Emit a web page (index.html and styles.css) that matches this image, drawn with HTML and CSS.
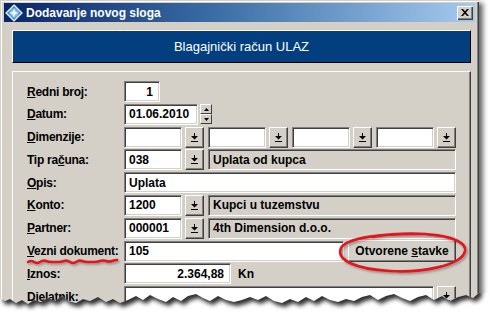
FILE: index.html
```html
<!doctype html>
<html lang="hr">
<head>
  <meta charset="utf-8">
  <title>Dodavanje novog sloga</title>
  <link rel="stylesheet" href="styles.css">
</head>
<body>
<div class="shot">

  <!-- Prozor dijaloga -->
  <div class="window">
    <div class="titlebar">
      <svg class="app-icon" width="18" height="18" viewBox="0 0 18 18" aria-hidden="true">
        <defs>
          <radialGradient id="gem" cx="50%" cy="50%" r="60%">
            <stop offset="0" stop-color="#e8f6ff"/>
            <stop offset=".45" stop-color="#5aa8ee"/>
            <stop offset="1" stop-color="#0d2f86"/>
          </radialGradient>
        </defs>
        <path d="M9 1 L17 9 L9 17 L1 9 Z" fill="url(#gem)" stroke="#fff" stroke-width="1.2"/>
        <path d="M9 4 L10 8 L14 9 L10 10 L9 14 L8 10 L4 9 L8 8 Z" fill="#fff"/>
      </svg>
      <span class="title">Dodavanje novog sloga</span>
      <span class="close">
        <svg width="8" height="7" viewBox="0 0 8 7"><path d="M0 0h2l2 2.2L6 0h2L5 3.5 8 7H6L4 4.8 2 7H0l3-3.5z" fill="#000"/></svg>
      </span>
    </div>

    <div class="client">
      <div class="banner">Blagajnički račun ULAZ</div>

      <div class="panel">
        <div class="row">
          <span class="lbl"><u>R</u>edni broj:</span>
          <span class="input w-redni right">1</span>
        </div>
        <div class="row">
          <span class="lbl"><u>D</u>atum:</span>
          <span class="input w-datum">01.06.2010</span>
          <span class="spin">
            <span class="spin-btn"><svg width="5" height="3" viewBox="0 0 5 3"><path d="M2.5 0L5 3H0z"/></svg></span>
            <span class="spin-btn"><svg width="5" height="3" viewBox="0 0 5 3"><path d="M0 0h5L2.5 3z"/></svg></span>
          </span>
        </div>
        <div class="row">
          <span class="lbl"><u>D</u>imenzije:</span>
          <span class="input w-code"></span>
          <span class="pick"><svg width="7" height="9" viewBox="0 0 7 9"><path d="M3 0h1v3h3L3.5 6.5 0 3h3zM0 8h7v1H0z"/></svg></span>
          <span class="input w-code"></span>
          <span class="pick"><svg width="7" height="9" viewBox="0 0 7 9"><path d="M3 0h1v3h3L3.5 6.5 0 3h3zM0 8h7v1H0z"/></svg></span>
          <span class="input w-code"></span>
          <span class="pick"><svg width="7" height="9" viewBox="0 0 7 9"><path d="M3 0h1v3h3L3.5 6.5 0 3h3zM0 8h7v1H0z"/></svg></span>
          <span class="input w-code"></span>
          <span class="pick"><svg width="7" height="9" viewBox="0 0 7 9"><path d="M3 0h1v3h3L3.5 6.5 0 3h3zM0 8h7v1H0z"/></svg></span>
        </div>
        <div class="row">
          <span class="lbl">Tip ra<u>č</u>una:</span>
          <span class="input w-code">038</span>
          <span class="pick"><svg width="7" height="9" viewBox="0 0 7 9"><path d="M3 0h1v3h3L3.5 6.5 0 3h3zM0 8h7v1H0z"/></svg></span>
          <span class="input show grow">Uplata od kupca</span>
        </div>
        <div class="row">
          <span class="lbl"><u>O</u>pis:</span>
          <span class="input grow">Uplata</span>
        </div>
        <div class="row">
          <span class="lbl"><u>K</u>onto:</span>
          <span class="input w-code">1200</span>
          <span class="pick"><svg width="7" height="9" viewBox="0 0 7 9"><path d="M3 0h1v3h3L3.5 6.5 0 3h3zM0 8h7v1H0z"/></svg></span>
          <span class="input show grow">Kupci u tuzemstvu</span>
        </div>
        <div class="row">
          <span class="lbl"><u>P</u>artner:</span>
          <span class="input w-code">000001</span>
          <span class="pick"><svg width="7" height="9" viewBox="0 0 7 9"><path d="M3 0h1v3h3L3.5 6.5 0 3h3zM0 8h7v1H0z"/></svg></span>
          <span class="input show grow">4th Dimension d.o.o.</span>
        </div>
        <div class="row">
          <span class="lbl"><u>V</u>ezni dokument:</span>
          <span class="input grow">105</span>
          <span class="btn"><span>Otvorene <u>s</u>tavke</span></span>
        </div>
        <div class="row">
          <span class="lbl"><u>I</u>znos:</span>
          <span class="input w-iznos right">2.364,88</span>
          <span class="unit">Kn</span>
        </div>
        <div class="row">
          <span class="lbl">D<u>j</u>elatnik:</span>
          <span class="input grow"></span>
          <span class="pick"><svg width="7" height="9" viewBox="0 0 7 9"><path d="M3 0h1v3h3L3.5 6.5 0 3h3zM0 8h7v1H0z"/></svg></span>
        </div>
      </div>
    </div>
  </div>

  <!-- Poderani rub i crvene oznake -->
  <svg class="overlay" width="493" height="322" viewBox="0 0 493 322" aria-hidden="true">
    <defs>
      <clipPath id="below">
        <path d="M0 298 L5 301 L10 299 L16 303 L22 300 L28 304 L34 300 L41 302 L48 298 L55 301 L62 296 L68 301 L76 303 L83 299 L90 301 L98 297 L106 302 L113 299 L120 303 L128 300 L136 296 L143 300 L150 295 L158 299 L166 302 L173 297 L181 301 L188 296 L196 294 L203 298 L210 301 L218 296 L226 300 L234 302 L242 300 L250 297 L258 300 L266 296 L274 301 L282 303 L290 299 L298 302 L306 297 L314 301 L322 296 L330 300 L338 302 L346 299 L354 301 L362 297 L370 295 L378 300 L386 296 L394 294 L402 298 L410 301 L418 297 L426 295 L434 300 L442 296 L450 301 L458 297 L466 295 L473 298 L479 293 L493 293 L493 322 L0 322 Z"/>
      </clipPath>
      <filter id="blur" x="-10%" y="-10%" width="120%" height="120%">
        <feGaussianBlur stdDeviation="2"/>
      </filter>
      <filter id="ink" x="-10%" y="-30%" width="120%" height="160%">
        <feDropShadow dx="1.5" dy="1.5" stdDeviation="1" flood-color="#000" flood-opacity=".35"/>
      </filter>
    </defs>

    <path fill="#fff" d="M0 298 L5 301 L10 299 L16 303 L22 300 L28 304 L34 300 L41 302 L48 298 L55 301 L62 296 L68 301 L76 303 L83 299 L90 301 L98 297 L106 302 L113 299 L120 303 L128 300 L136 296 L143 300 L150 295 L158 299 L166 302 L173 297 L181 301 L188 296 L196 294 L203 298 L210 301 L218 296 L226 300 L234 302 L242 300 L250 297 L258 300 L266 296 L274 301 L282 303 L290 299 L298 302 L306 297 L314 301 L322 296 L330 300 L338 302 L346 299 L354 301 L362 297 L370 295 L378 300 L386 296 L394 294 L402 298 L410 301 L418 297 L426 295 L434 300 L442 296 L450 301 L458 297 L466 295 L473 298 L479 293 L493 293 L493 322 L0 322 Z"/>

    <g clip-path="url(#below)">
      <path fill="#2e2e2e" filter="url(#blur)" transform="translate(3 4)" d="M0 0 L479 0 L479 293 L473 298 L466 295 L458 297 L450 301 L442 296 L434 300 L426 295 L418 297 L410 301 L402 298 L394 294 L386 296 L378 300 L370 295 L362 297 L354 301 L346 299 L338 302 L330 300 L322 296 L314 301 L306 297 L298 302 L290 299 L282 303 L274 301 L266 296 L258 300 L250 297 L242 300 L234 302 L226 300 L218 296 L210 301 L203 298 L196 294 L188 296 L181 301 L173 297 L166 302 L158 299 L150 295 L143 300 L136 296 L128 300 L120 303 L113 299 L106 302 L98 297 L90 301 L83 299 L76 303 L68 301 L62 296 L55 301 L48 298 L41 302 L34 300 L28 304 L22 300 L16 303 L10 299 L5 301 L0 298 Z"/>
    </g>

    <g fill="none" stroke="#e3131b" stroke-width="2.6" stroke-linecap="round" filter="url(#ink)">
      <path d="M372 237 C420 229 468 236 465 251 C462 266 420 273 390 271 C355 269 336 260 341 248 C346 238 382 233 424 234"/>
      <path d="M28 262 q3 -2 6 0 t6 0 t6 -1 t6 1 t6 0 t6 -1 t6 1 t6 0 t6 -1 t6 1 t6 0 t6 -1 t6 0 t6 0 t5 -1"/>
    </g>
  </svg>
</div>
</body>
</html>
```

FILE: styles.css
```css
/* ===== Win classic tokens ===== */
:root{
  --face:#d4d0c8; --hi:#fff; --shadow:#808080; --dark:#404040;
  --navy:#033f7f;
}
*{ box-sizing:border-box }
body{ margin:0; background:#fff; font:bold 12px "Liberation Sans", Arial, sans-serif; color:#000; overflow:hidden; }

.shot{ position:relative; width:493px; height:322px; overflow:hidden; }

/* Window frame */
.window{ width:479px; height:340px; padding:3px 4px 0 4px; background:var(--face);
  box-shadow: inset 1px 1px 0 var(--face), inset 2px 2px 0 var(--hi), inset -1px -1px 0 var(--dark), inset -2px -2px 0 var(--shadow), 4px 3px 5px rgba(0,0,0,.6); }

.titlebar{ height:19px; display:flex; align-items:center; padding:0 2px 0 1px; color:#fff;
  background:linear-gradient(90deg,#0a246a 0%,#3a6ea5 45%,#a6caf0 100%); }
.app-icon{ display:block; margin-right:3px; }
.title{ flex:1; font-size:12px; font-weight:bold; white-space:nowrap; }
.close{ width:16px; height:14px; display:flex; align-items:center; justify-content:center; background:var(--face);
  box-shadow: inset 1px 1px 0 var(--hi), inset -1px -1px 0 var(--dark), inset -2px -2px 0 var(--shadow); }
.close svg{ display:block; }

.client{ padding:8px 4px 0 8px; }

.banner{ height:33px; display:flex; align-items:center; justify-content:center; background:var(--navy); color:#fff;
  font-weight:normal; font-size:13px; border:1px solid; border-color:#fff #000 #000 #fff; }

/* Form panel */
.panel{ margin-top:8px; padding:9px 15px 20px 14px; display:grid; row-gap:1.8px;
  border:1px solid; border-color:#fff var(--dark) var(--dark) #fff; box-shadow: inset -1px 0 0 var(--shadow); }
.row{ height:21px; display:flex; align-items:center; }
.lbl{ width:97px; flex:none; letter-spacing:-.25px; white-space:nowrap; }
.lbl u, .btn u{ text-underline-offset:1px; }

.input{ height:21px; display:flex; align-items:center; padding:0 4px; background:#fff; white-space:nowrap; overflow:hidden;
  border:1px solid; border-color:var(--shadow) var(--hi) var(--hi) var(--shadow);
  box-shadow: inset 1px 1px 0 var(--dark), inset -1px -1px 0 var(--face); }
.input.show{ background:var(--face); }
.input.right{ justify-content:flex-end; padding-right:6px; }
.grow{ flex:1; }
.w-redni{ width:36px; }
.w-datum{ width:74px; }
.w-code{ width:58px; }
.w-iznos{ width:107px; }

.pick{ width:19px; height:21px; flex:none; margin:0 4px 0 3px; display:flex; align-items:center; justify-content:center; background:var(--face);
  border:1px solid; border-color:var(--hi) var(--dark) var(--dark) var(--hi); box-shadow: inset -1px -1px 0 var(--shadow); }
.pick svg{ display:block; fill:#000; }
.row .pick:last-child{ margin-right:0; }

.spin{ margin-left:2px; width:12px; height:20px; display:flex; flex-direction:column; }
.spin-btn{ flex:1; display:flex; align-items:center; justify-content:center; background:var(--face);
  border:1px solid; border-color:var(--hi) var(--dark) var(--dark) var(--hi); }
.spin-btn svg{ display:block; fill:#000; }

.btn{ width:108px; height:22px; margin-left:4px; display:flex; align-items:center; justify-content:center; background:var(--face);
  border:1px solid; border-color:var(--hi) var(--dark) var(--dark) var(--hi); box-shadow: inset -1px -1px 0 var(--shadow); white-space:nowrap; }

.unit{ margin-left:7px; }

.overlay{ position:absolute; left:0; top:0; }
```
